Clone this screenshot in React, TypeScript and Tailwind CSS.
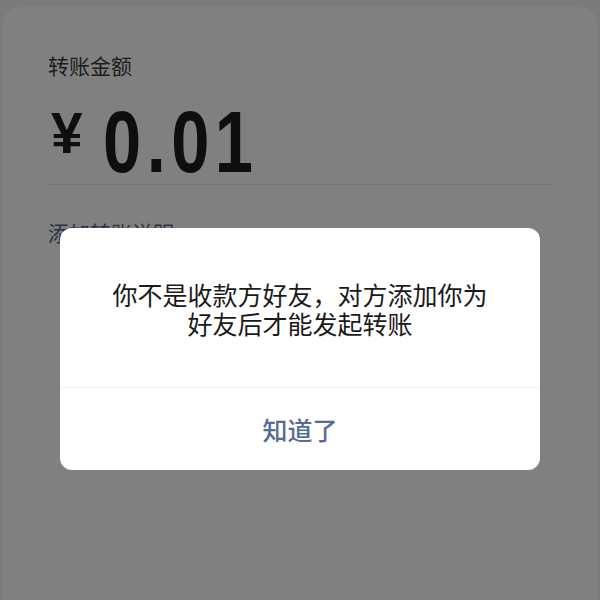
import React from "react";

const cjk = "font-['Noto_Sans_CJK_SC',sans-serif]";

function TransferPage() {
    return (
        <div className="mx-[3px] mt-[7px] h-[593px] rounded-t-[16px] bg-[#808080] pl-[45px] pr-[45px] pt-[44px]">
            <p className={`${cjk} h-[28px] text-[21px] leading-[28px] text-[#1c1c1c]`}>
                转账金额
            </p>
            <div className="mt-[21px] flex h-[85px] items-start border-b border-[#767676] font-['Liberation_Sans',sans-serif] text-[#0e0e0e]">
                <span className="ml-[3px] mt-[5px] text-[57px] font-bold leading-none">
                    ¥
                </span>
                <span className="ml-[20px] inline-block origin-left scale-x-[0.78] text-[88px] font-bold leading-[84px] tracking-[7px]">
                    0.01
                </span>
            </div>
            <p className={`${cjk} mt-[33px] h-[28px] text-[21px] leading-[28px] text-[#2a3245]`}>
                添加转账说明
            </p>
        </div>
    );
}

function Dialog() {
    return (
        <div className={`${cjk} absolute left-[60px] top-[228px] w-[480px] overflow-hidden rounded-[12px] bg-white`}>
            <div className="flex h-[159px] items-center justify-center px-[44px] pt-[3px]">
                <p className="text-center text-[25px] leading-[29px] text-[#1a1a1a]">
                    你不是收款方好友，对方添加你为好友后才能发起转账
                </p>
            </div>
            <div className="flex h-[83px] items-center justify-center border-t border-[#efefef]">
                <span className="text-[25px] font-medium leading-none text-[#576b95]">
                    知道了
                </span>
            </div>
        </div>
    );
}

export default function App() {
    return (
        <div className="relative h-[600px] w-[600px] overflow-hidden bg-[#7b7b7b]">
            <TransferPage />
            <Dialog />
        </div>
    );
}
